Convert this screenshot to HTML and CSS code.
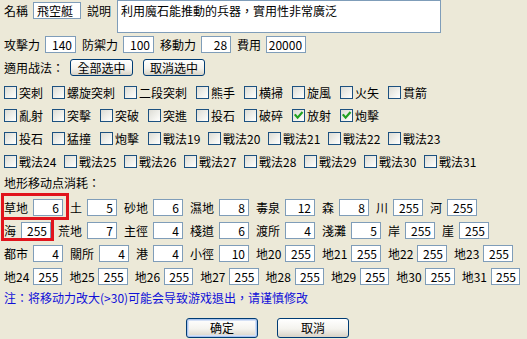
FILE: index.html
```html
<!DOCTYPE html>
<html lang="zh-Hant">
<head>
<meta charset="utf-8">
<link rel="stylesheet" href="styles.css">
</head>
<body>
<div class="dlg">
  <div class="top">
    <span class="lbl w2 gap">名稱</span>
    <span class="field name">飛空艇</span>
    <span class="lbl w2 gap2">説明</span>
    <div class="memo">利用魔石能推動的兵器，實用性非常廣泛</div>
  </div>

  <div class="stats">
    <span class="lbl gap">攻擊力</span><span class="field s31">140</span>
    <span class="lbl gap">防禦力</span><span class="field s31">100</span>
    <span class="lbl gap">移動力</span><span class="field s30">28</span>
    <span class="lbl gap">費用</span><span class="field s40">20000</span>
  </div>

  <div class="tactics-head">
    <span class="lbl">適用战法：</span>
    <span class="btn b-all">全部选中</span>
    <span class="btn b-none">取消选中</span>
  </div>

  <div class="checks">
    <div class="crow">
      <span class="chk"><i class="box"></i><span class="t2">突刺</span></span>
      <span class="chk"><i class="box"></i><span class="t4">螺旋突刺</span></span>
      <span class="chk"><i class="box"></i><span class="t4">二段突刺</span></span>
      <span class="chk"><i class="box"></i><span class="t2">熊手</span></span>
      <span class="chk"><i class="box"></i><span class="t2">横掃</span></span>
      <span class="chk"><i class="box"></i><span class="t2">旋風</span></span>
      <span class="chk"><i class="box"></i><span class="t2">火矢</span></span>
      <span class="chk"><i class="box"></i><span class="t2">貫箭</span></span>
    </div>
    <div class="crow">
      <span class="chk"><i class="box"></i><span class="t2">亂射</span></span>
      <span class="chk"><i class="box"></i><span class="t2">突擊</span></span>
      <span class="chk"><i class="box"></i><span class="t2">突破</span></span>
      <span class="chk"><i class="box"></i><span class="t2">突進</span></span>
      <span class="chk"><i class="box"></i><span class="t2">投石</span></span>
      <span class="chk"><i class="box"></i><span class="t2">破碎</span></span>
      <span class="chk"><i class="box on"><svg viewBox="0 0 11 11" width="11" height="11"><path d="M2.5 5.2 L4.6 7.6 L8.8 2.8" fill="none" stroke="#21A121" stroke-width="2.2" stroke-linecap="square"/></svg></i><span class="t2">放射</span></span>
      <span class="chk"><i class="box on"><svg viewBox="0 0 11 11" width="11" height="11"><path d="M2.5 5.2 L4.6 7.6 L8.8 2.8" fill="none" stroke="#21A121" stroke-width="2.2" stroke-linecap="square"/></svg></i><span class="t2">炮擊</span></span>
    </div>
    <div class="crow">
      <span class="chk"><i class="box"></i><span class="t2">投石</span></span>
      <span class="chk"><i class="box"></i><span class="t2">猛撞</span></span>
      <span class="chk"><i class="box"></i><span class="t2">炮擊</span></span>
      <span class="chk"><i class="box"></i><span class="t3">戰法19</span></span>
      <span class="chk"><i class="box"></i><span class="t3">戰法20</span></span>
      <span class="chk"><i class="box"></i><span class="t3">戰法21</span></span>
      <span class="chk"><i class="box"></i><span class="t3">戰法22</span></span>
      <span class="chk"><i class="box"></i><span class="t3">戰法23</span></span>
    </div>
    <div class="crow">
      <span class="chk"><i class="box"></i><span class="t3">戰法24</span></span>
      <span class="chk"><i class="box"></i><span class="t3">戰法25</span></span>
      <span class="chk"><i class="box"></i><span class="t3">戰法26</span></span>
      <span class="chk"><i class="box"></i><span class="t3">戰法27</span></span>
      <span class="chk"><i class="box"></i><span class="t3">戰法28</span></span>
      <span class="chk"><i class="box"></i><span class="t3">戰法29</span></span>
      <span class="chk"><i class="box"></i><span class="t3">戰法30</span></span>
      <span class="chk"><i class="box"></i><span class="t3">戰法31</span></span>
    </div>
  </div>

  <div class="terrain-head">地形移动点消耗：</div>

  <div class="terrain">
    <div class="trow">
      <span class="tl w2">草地</span><span class="field tv">6</span>
      <span class="tl w1">土</span><span class="field tv">5</span>
      <span class="tl w2">砂地</span><span class="field tv">6</span>
      <span class="tl w2">濕地</span><span class="field tv">8</span>
      <span class="tl w2">毒泉</span><span class="field tv">12</span>
      <span class="tl w1">森</span><span class="field tv">8</span>
      <span class="tl w1">川</span><span class="field tv">255</span>
      <span class="tl w1">河</span><span class="field tv">255</span>
    </div>
    <div class="trow">
      <span class="tl w1">海</span><span class="field tv">255</span>
      <span class="tl w2">荒地</span><span class="field tv">7</span>
      <span class="tl w2">主徑</span><span class="field tv">4</span>
      <span class="tl w2">棧道</span><span class="field tv">6</span>
      <span class="tl w2">渡所</span><span class="field tv">4</span>
      <span class="tl w2">淺灘</span><span class="field tv">5</span>
      <span class="tl w1">岸</span><span class="field tv">255</span>
      <span class="tl w1">崖</span><span class="field tv">255</span>
    </div>
    <div class="trow">
      <span class="tl w2">都市</span><span class="field tv">4</span>
      <span class="tl w2">關所</span><span class="field tv">4</span>
      <span class="tl w1">港</span><span class="field tv">4</span>
      <span class="tl w2">小徑</span><span class="field tv">10</span>
      <span class="tl w2">地20</span><span class="field tv">255</span>
      <span class="tl w2">地21</span><span class="field tv">255</span>
      <span class="tl w2">地22</span><span class="field tv">255</span>
      <span class="tl w2">地23</span><span class="field tv">255</span>
    </div>
    <div class="trow">
      <span class="tl w2">地24</span><span class="field tv">255</span>
      <span class="tl w2">地25</span><span class="field tv">255</span>
      <span class="tl w2">地26</span><span class="field tv">255</span>
      <span class="tl w2">地27</span><span class="field tv">255</span>
      <span class="tl w2">地28</span><span class="field tv">255</span>
      <span class="tl w2">地29</span><span class="field tv">255</span>
      <span class="tl w2">地30</span><span class="field tv">255</span>
      <span class="tl w2">地31</span><span class="field tv">255</span>
    </div>
  </div>

  <div class="note">注：将移动力改大(&gt;30)可能会导致游戏退出，请谨慎修改</div>

  <div class="actions">
    <span class="btn big default">确定</span>
    <span class="btn big">取消</span>
  </div>
</div>

<div class="mark mark-a"></div>
<div class="mark mark-b"></div>
</body>
</html>
```

FILE: styles.css
```css
html, body {
  margin: 0;
  padding: 0;
}

body {
  width: 527px;
  height: 339px;
  overflow: hidden;
  position: relative;
  background: #ECE9D8;
  color: #000;
  font-family: "Noto Sans CJK TC", "Noto Sans CJK SC", sans-serif;
  font-size: 12px;
  line-height: 15px;
}

.dlg {
  padding-left: 4px;
}

.lbl {
  white-space: nowrap;
  line-height: 17px;
}

.gap {
  margin-right: 5px;
}

.gap2 {
  margin-right: 6px;
}

.field {
  box-sizing: border-box;
  display: block;
  height: 17px;
  border: 1px solid #7F9DB9;
  background: #fff;
  line-height: 15px;
  text-align: right;
  padding-right: 3px;
  white-space: nowrap;
}

/* top row */
.top {
  display: flex;
  align-items: flex-start;
  height: 33px;
}

.top .lbl,
.top .field {
  margin-top: 2px;
}

.field.name {
  width: 48px;
  text-align: left;
  padding-left: 3px;
  margin-right: 6px;
}

.memo {
  box-sizing: border-box;
  width: 324px;
  height: 33px;
  border: 1px solid #7F9DB9;
  background: #fff;
  padding: 2px 3px;
  line-height: 15px;
}

/* stats row */
.stats {
  display: flex;
  align-items: center;
  margin-top: 3px;
  height: 17px;
}

.stats .field {
  margin-right: 6px;
}

.s31 { width: 31px; }
.s30 { width: 30px; }
.s40 { width: 40px; }

/* tactics */
.tactics-head {
  display: flex;
  align-items: center;
  margin-top: 6px;
  height: 17px;
}

.tactics-head .lbl {
  margin-right: 6px;
}

.btn {
  box-sizing: border-box;
  display: block;
  height: 17px;
  border: 1px solid #003C74;
  border-radius: 3px;
  background: linear-gradient(#FFFFFF, #F4F3EE 55%, #D8D3C6);
  text-align: center;
  line-height: 15px;
  white-space: nowrap;
}

.b-all {
  width: 63px;
  margin-right: 10px;
}

.b-none {
  width: 62px;
}

.checks {
  display: flex;
  flex-direction: column;
  gap: 10px;
  margin-top: 10px;
}

.crow {
  display: flex;
  height: 13px;
}

.chk {
  display: flex;
  align-items: center;
  margin-right: 9px;
  white-space: nowrap;
  line-height: 13px;
}

.box {
  box-sizing: border-box;
  display: block;
  width: 13px;
  height: 13px;
  border: 1px solid #1C5180;
  background: linear-gradient(135deg, #DCDCD5, #F5F5F1 70%, #FFFFFF);
  margin-right: 2px;
}

.box svg {
  display: block;
}

.t2 { width: 24px; }
.t3 { width: 36px; }
.t4 { width: 48px; }

/* terrain */
.terrain-head {
  margin-top: 8px;
  line-height: 14px;
  white-space: nowrap;
}

.terrain {
  display: flex;
  flex-direction: column;
  gap: 6px;
  margin-top: 9px;
}

.trow {
  display: flex;
  align-items: center;
  height: 17px;
}

.tl {
  white-space: nowrap;
  margin-right: 5px;
  line-height: 17px;
}

.w1 { width: 12px; }
.w2 { width: 24px; }

.tv {
  width: 30px;
  margin-right: 7px;
}

.note {
  margin-top: 6px;
  line-height: 14px;
  color: #1010D8;
  white-space: nowrap;
}

.actions {
  display: flex;
  gap: 19px;
  margin-top: 13px;
  padding-left: 182px;
}

.btn.big {
  width: 72px;
  height: 20px;
  line-height: 18px;
}

.btn.default {
  box-shadow: inset 0 0 0 1px #A9C4EE, inset 0 0 0 2px #D4E0F5;
}

/* red annotation frames */
.mark {
  position: absolute;
  box-sizing: border-box;
  border: 3px solid #E1141C;
}

.mark-a {
  left: 1px;
  top: 193px;
  width: 68px;
  height: 27px;
}

.mark-b {
  left: 1px;
  top: 217px;
  width: 53px;
  height: 24px;
}
```
